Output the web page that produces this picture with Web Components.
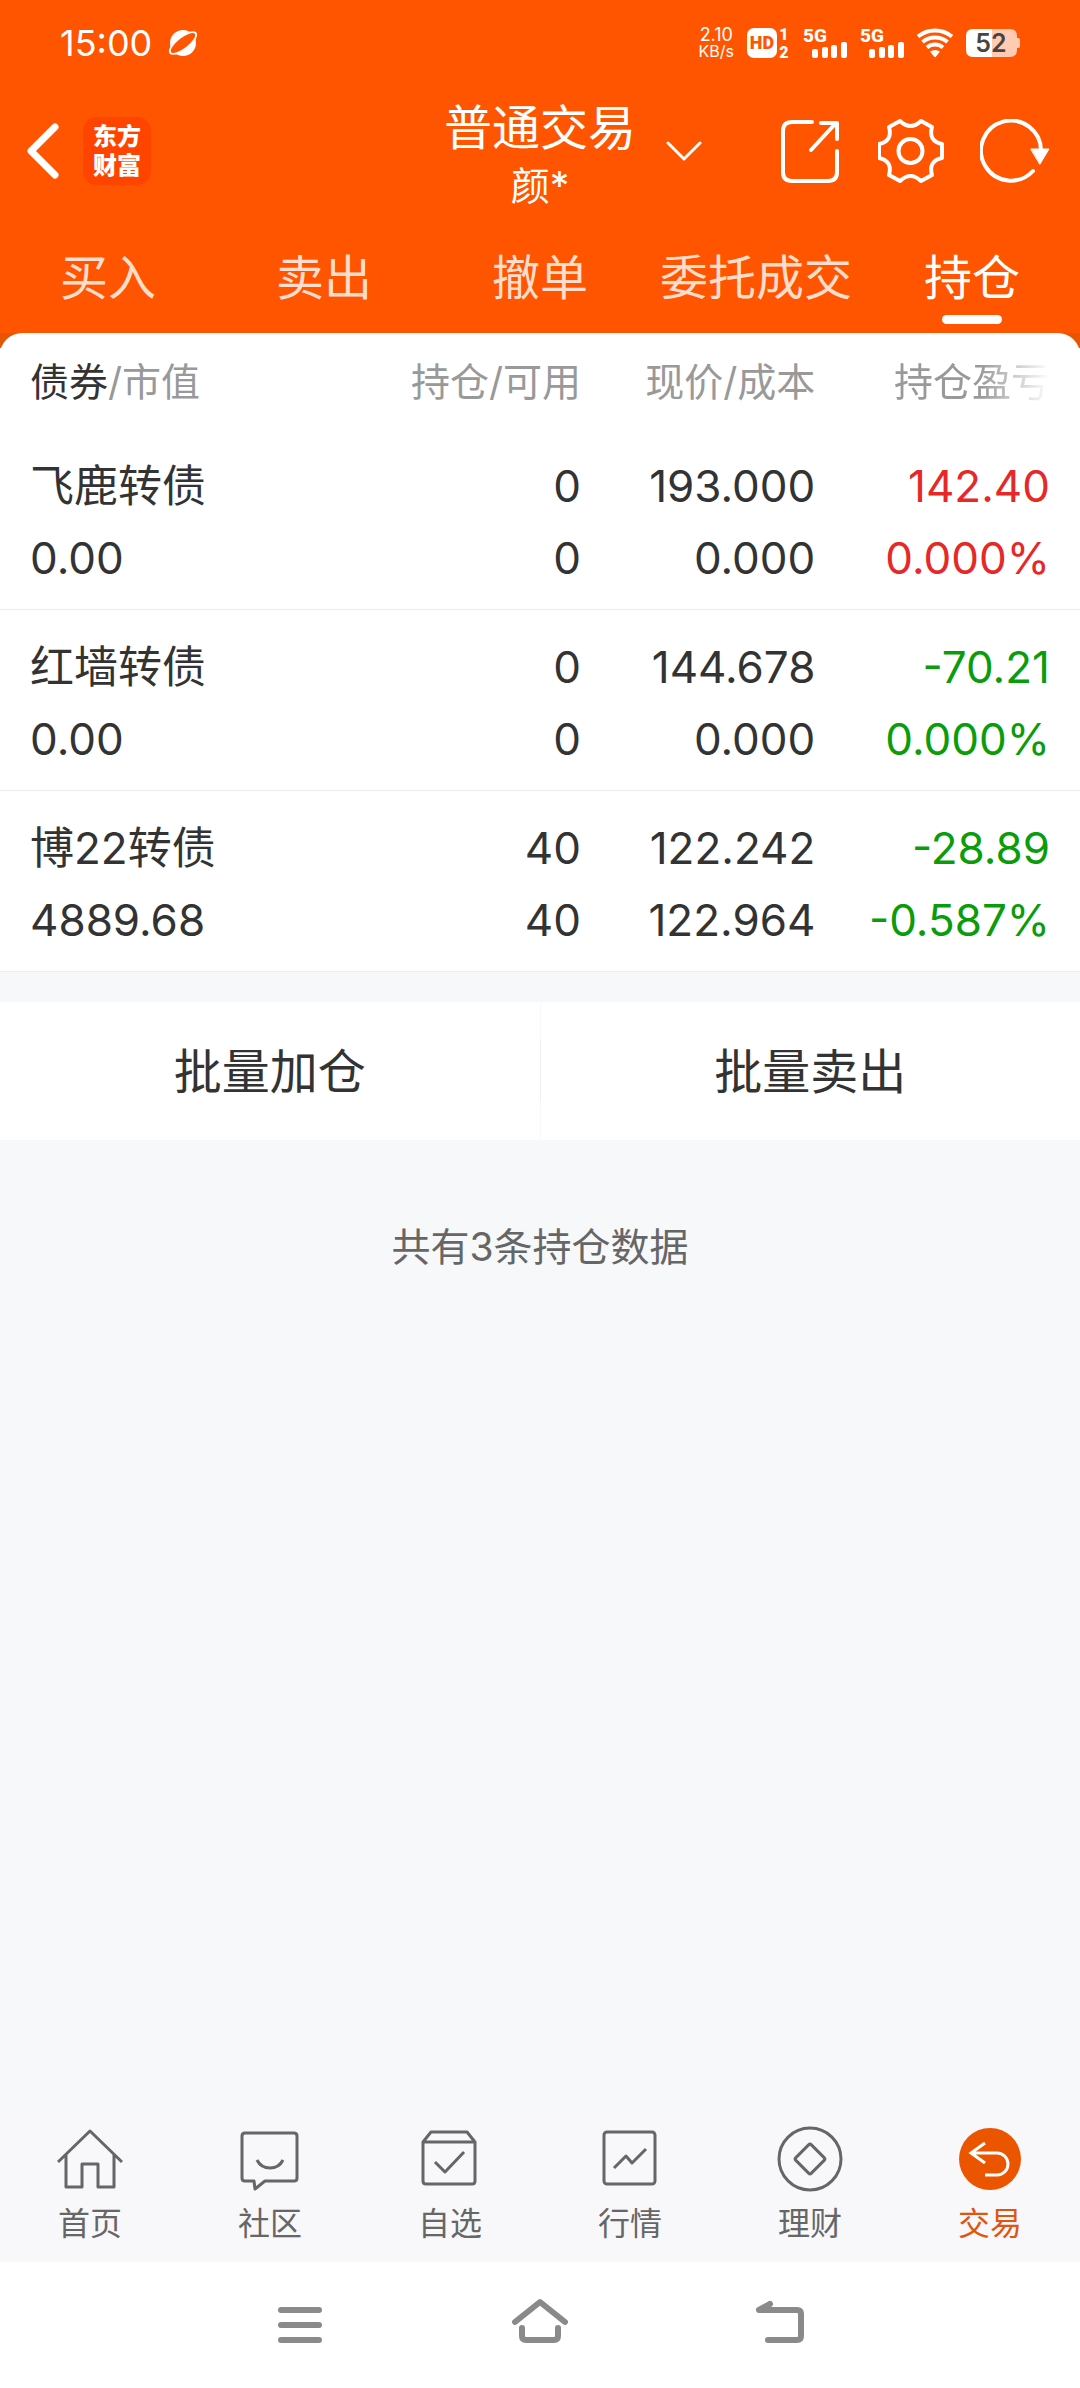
<!DOCTYPE html>
<html lang="zh-CN">
<head>
<meta charset="UTF-8">
<meta name="viewport" content="width=device-width, initial-scale=1">
<title>普通交易</title>
<style>
  body {
    margin: 0;
    min-height: 100vh;
    display: flex;
    flex-direction: column;
    background: #f7f8fa;
    color: #333;
    font-family: Inter, "Noto Sans CJK SC", sans-serif;
  }
  main {
    flex: 1;
  }
  .summary {
    margin: 0;
    padding: 77px 30px;
    color: #666;
    font-size: 39px;
    line-height: 60px;
    text-align: center;
  }
</style>
</head>
<body>
  <status-bar time="15:00" speed="2.10" battery="52"></status-bar>
  <trade-header>
    普通交易
    <span slot="account">颜*</span>
  </trade-header>
  <trade-tabs>
    <trade-tab>买入</trade-tab>
    <trade-tab>卖出</trade-tab>
    <trade-tab>撤单</trade-tab>
    <trade-tab>委托成交</trade-tab>
    <trade-tab active>持仓</trade-tab>
  </trade-tabs>
  <main>
    <holdings-table></holdings-table>
    <batch-actions>
      <span slot="buy">批量加仓</span>
      <span slot="sell">批量卖出</span>
    </batch-actions>
    <p class="summary">共有3条持仓数据</p>
  </main>
  <app-tabbar>
    <app-tab icon="home">首页</app-tab>
    <app-tab icon="community">社区</app-tab>
    <app-tab icon="watchlist">自选</app-tab>
    <app-tab icon="market">行情</app-tab>
    <app-tab icon="wealth">理财</app-tab>
    <app-tab icon="trade" active>交易</app-tab>
  </app-tabbar>
  <system-nav></system-nav>

<script>
class StatusBar extends HTMLElement {
  connectedCallback() {
    const signal = `
      <svg width="44" height="30" viewBox="0 0 44 30">
        <text x="0" y="14" font-family="Roboto" font-size="19" font-weight="800">5G</text>
        <rect x="9" y="21" width="6" height="9" rx="2"/>
        <rect x="19" y="19" width="6" height="11" rx="2"/>
        <rect x="28" y="17" width="6" height="13" rx="2"/>
        <rect x="38" y="14" width="6" height="16" rx="2"/>
      </svg>`;
    this.attachShadow({ mode: 'open' });
    this.shadowRoot.innerHTML = `
      <style>
        :host {
          display: flex;
          align-items: center;
          justify-content: space-between;
          padding: 20px 60px;
          background: #ff5500;
          color: #fff;
        }
        .left, .right {
          display: flex;
          align-items: center;
        }
        .left { gap: 16px; }
        .right { gap: 13px; }
        time {
          font-size: 36px;
          line-height: 46px;
        }
        svg {
          display: block;
          overflow: visible;
          fill: #fff;
        }
        .speed {
          display: flex;
          flex-direction: column;
          align-items: center;
          font-size: 18px;
          line-height: 16px;
        }
        .speed small { font-size: 16px; }
      </style>
      <div class="left">
        <time>${this.getAttribute('time')}</time>
        <svg width="30" height="30" viewBox="0 0 30 30">
          <ellipse cx="15" cy="15" rx="17" ry="7" transform="rotate(-38 15 15)"/>
          <circle cx="15" cy="15" r="13"/>
          <ellipse cx="15" cy="15" rx="15" ry="5" transform="rotate(-38 15 15)" fill="#ff5500"/>
        </svg>
      </div>
      <div class="right">
        <div class="speed"><span>${this.getAttribute('speed')}</span><small>KB/s</small></div>
        <svg width="43" height="30" viewBox="0 0 43 30">
          <rect width="30" height="30" rx="7"/>
          <text x="15" y="21" font-family="Roboto" font-size="18" font-weight="900" text-anchor="middle" fill="#ff5500">HD</text>
          <text x="37" y="12" font-family="Roboto" font-size="16" font-weight="900" text-anchor="middle">1</text>
          <text x="37" y="30" font-family="Roboto" font-size="16" font-weight="900" text-anchor="middle">2</text>
        </svg>
        ${signal}
        ${signal}
        <svg width="36" height="30" viewBox="0 0 36 30">
          <g fill="none" stroke="#fff" stroke-width="4">
            <path d="M1 8.5A27 27 0 0 1 35 8.5"/>
            <path d="M5.500 14A19.500 19.500 0 0 1 30.500 14"/>
            <path d="M10 19.500A12.500 12.500 0 0 1 26 19.500"/>
          </g>
          <path d="M13 23.500Q18 20.500 23 23.500L19 28.500Q18 30 17 28.500Z"/>
        </svg>
        <svg width="54" height="28" viewBox="0 0 54 28">
          <path d="M26 0H44Q51 0 51 7V9H52Q54 9 54 11V17Q54 19 52 19H51V21Q51 28 44 28H26Z" fill="#ffccb3"/>
          <path d="M26 0H7Q0 0 0 7V21Q0 28 7 28H26Z"/>
          <text x="25" y="23" font-family="Inter" font-size="25" font-weight="600" text-anchor="middle" fill="#4a4440">${this.getAttribute('battery')}</text>
        </svg>
      </div>
    `;
  }
}

class TradeHeader extends HTMLElement {
  connectedCallback() {
    this.attachShadow({ mode: 'open' });
    this.shadowRoot.innerHTML = `
      <style>
        :host {
          display: grid;
          grid-template-columns: 1fr auto 1fr;
          align-items: center;
          padding: 0 30px 0 24px;
          background: #ff5500;
          color: #fff;
        }
        .side {
          display: flex;
          align-items: center;
        }
        .actions {
          justify-content: space-between;
          padding-left: 30px;
        }
        .icons {
          display: flex;
          gap: 36px;
        }
        .title {
          padding: 13px 0 1px 6px;
          text-align: center;
        }
        h1 {
          margin: 0;
          font-size: 48px;
          font-weight: 400;
          line-height: 58px;
        }
        .account {
          font-size: 39px;
          line-height: 58px;
        }
        button {
          display: block;
          margin: 0;
          padding: 0;
          border: 0;
          background: none;
          color: inherit;
        }
        svg {
          display: block;
          fill: none;
          stroke: #fff;
          stroke-width: 4;
          stroke-linecap: round;
          stroke-linejoin: round;
        }
        .logo {
          display: grid;
          place-content: center;
          width: 68px;
          height: 68px;
          margin-left: 20px;
          border-radius: 14px;
          background: #ff4400;
          color: #fff;
          font-size: 24px;
          font-weight: 900;
          line-height: 29px;
          text-decoration: none;
        }
      </style>
      <div class="side">
        <button aria-label="返回">
          <svg width="39" height="60" viewBox="0 0 39 60"><path d="M31 6L7 30L31 54" stroke-width="7"/></svg>
        </button>
        <a class="logo" href="#">东方<br>财富</a>
      </div>
      <div class="title">
        <h1><slot></slot></h1>
        <div class="account"><slot name="account"></slot></div>
      </div>
      <div class="side actions">
        <button aria-label="切换账户">
          <svg width="36" height="22" viewBox="0 0 36 22"><path d="M2 3L18 19L34 3" stroke-width="3"/></svg>
        </button>
        <div class="icons">
          <button aria-label="分享">
            <svg width="66" height="64" viewBox="0 0 66 64">
              <path d="M36 3H16Q7 3 7 12V53Q7 62 16 62H52Q61 62 61 53V32"/>
              <path d="M35 31L60 4M45 4H61V20"/>
            </svg>
          </button>
          <button aria-label="设置">
            <svg width="66" height="64" viewBox="0 0 66 64">
              <path d="M22 2Q32.500 12 43 2L54 8Q50 22 64 25V39Q50 42 54 56L43 62Q32.500 52 22 62L11 56Q15 42 1 39V25Q15 22 11 8Z"/>
              <circle cx="32.500" cy="32" r="12"/>
            </svg>
          </button>
          <button aria-label="刷新">
            <svg width="70" height="64" viewBox="0 0 70 64">
              <path d="M53 52A30 30 0 1 1 61 32"/>
              <path d="M51 30H69L60 45Z" fill="#fff" stroke-width="1"/>
            </svg>
          </button>
        </div>
      </div>
    `;
  }
}

class TradeTabs extends HTMLElement {
  connectedCallback() {
    this.attachShadow({ mode: 'open' });
    this.shadowRoot.innerHTML = `
      <style>
        :host {
          display: block;
          background: #ff5500;
        }
        nav {
          display: grid;
          grid-auto-flow: column;
          grid-auto-columns: 1fr;
        }
      </style>
      <nav><slot></slot></nav>
    `;
  }
}

class TradeTab extends HTMLElement {
  connectedCallback() {
    this.attachShadow({ mode: 'open' });
    this.shadowRoot.innerHTML = `
      <style>
        :host {
          display: block;
        }
        button {
          display: flex;
          flex-direction: column;
          align-items: center;
          gap: 7px;
          width: 100%;
          padding: 32px 0 9px;
          border: 0;
          background: none;
          color: #ffddcc;
          font: inherit;
          font-size: 48px;
          line-height: 60px;
          white-space: nowrap;
        }
        button::after {
          content: "";
          width: 60px;
          height: 9px;
          border-radius: 5px;
        }
        :host([active]) button { color: #fff; }
        :host([active]) button::after { background: #fff; }
      </style>
      <button><slot></slot></button>
    `;
  }
}

const holdings = [
  { name: '飞鹿转债', value: '0.00', held: '0', usable: '0', price: '193.000', cost: '0.000', profit: '142.40', rate: '0.000%', trend: 'up' },
  { name: '红墙转债', value: '0.00', held: '0', usable: '0', price: '144.678', cost: '0.000', profit: '-70.21', rate: '0.000%', trend: 'down' },
  { name: '博22转债', value: '4889.68', held: '40', usable: '40', price: '122.242', cost: '122.964', profit: '-28.89', rate: '-0.587%', trend: 'down' },
];

class HoldingsTable extends HTMLElement {
  connectedCallback() {
    const rows = holdings.map((h) => `
      <tr>
        <td><div>${h.name}</div><div>${h.value}</div></td>
        <td><div>${h.held}</div><div>${h.usable}</div></td>
        <td><div>${h.price}</div><div>${h.cost}</div></td>
        <td class="${h.trend}"><div>${h.profit}</div><div>${h.rate}</div></td>
      </tr>`).join('');
    this.attachShadow({ mode: 'open' });
    this.shadowRoot.innerHTML = `
      <style>
        /* darker orange shows only behind the rounded top corners */
        :host {
          display: block;
          background: linear-gradient(#e85500 15px, #fff 15px);
        }
        .sheet {
          border-radius: 22px 22px 0 0;
          background: #fff;
        }
        table {
          width: 100%;
          border-collapse: separate;
          border-spacing: 0;
          table-layout: fixed;
        }
        th, td {
          box-sizing: border-box;
          padding: 0;
          text-align: right;
          white-space: nowrap;
        }
        th {
          height: 96px;
          padding-top: 2px;
          color: #999;
          font-size: 39px;
          font-weight: 400;
          line-height: 60px;
        }
        th b {
          color: #333;
          font-weight: 400;
        }
        td {
          padding: 21px 0 15px;
          border-bottom: 1px solid #ececec;
          font-size: 44px;
          line-height: 72px;
        }
        th:first-child, td:first-child {
          width: 29%;
          padding-left: 30px;
          text-align: left;
        }
        th:last-child, td:last-child { padding-right: 30px; }
        .fade {
          display: inline-block;
          -webkit-mask-image: linear-gradient(to right, #000 55%, transparent);
          mask-image: linear-gradient(to right, #000 55%, transparent);
        }
        .held { width: 24.8%; }
        .price { width: 21.7%; }
        .up { color: #e62828; }
        .down { color: #0a9c0a; }
      </style>
      <div class="sheet">
        <table>
          <thead>
            <tr>
              <th><b>债券</b>/市值</th>
              <th class="held">持仓/可用</th>
              <th class="price">现价/成本</th>
              <th><span class="fade">持仓盈亏</span></th>
            </tr>
          </thead>
          <tbody>${rows}</tbody>
        </table>
      </div>
    `;
  }
}

class BatchActions extends HTMLElement {
  connectedCallback() {
    this.attachShadow({ mode: 'open' });
    this.shadowRoot.innerHTML = `
      <style>
        :host {
          display: flex;
          margin-top: 30px;
          background: #fff;
        }
        button {
          flex: 1;
          padding: 40px 0 38px;
          border: 0;
          background: none;
          color: #333;
          font: inherit;
          font-size: 48px;
          line-height: 60px;
        }
        i {
          width: 1px;
          background: linear-gradient(#f7f8fa 39px, #f0f0f2 39px 99px, #f7f8fa 99px);
        }
      </style>
      <button><slot name="buy"></slot></button>
      <i></i>
      <button><slot name="sell"></slot></button>
    `;
  }
}

class AppTabbar extends HTMLElement {
  connectedCallback() {
    this.attachShadow({ mode: 'open' });
    this.shadowRoot.innerHTML = `
      <style>
        :host {
          display: block;
          background: #f8f8fb;
        }
        nav {
          display: grid;
          grid-auto-flow: column;
          grid-auto-columns: 1fr;
        }
      </style>
      <nav><slot></slot></nav>
    `;
  }
}

const tabIcons = {
  home: `<path d="M1 36L33 5L65 36M9 29V61H25V38H41V61H57V29"/>`,
  community: `
    <path d="M8 7H57Q60 7 60 10V52Q60 55 57 55H28L18 63L17 55H8Q5 55 5 52V10Q5 7 8 7Z"/>
    <path d="M20 34Q24 42 33 42Q42 42 46 34"/>`,
  watchlist: `
    <path d="M6 16L14 6H50L58 16V55Q58 58 55 58H9Q6 58 6 55ZM6 16H58"/>
    <path d="M18 36L28 46L47 26"/>`,
  market: `
    <rect x="7" y="6" width="51" height="52" rx="3"/>
    <path d="M17 42L29 30L35 37L49 23"/>`,
  wealth: `
    <circle cx="33" cy="33" r="31"/>
    <rect x="22" y="22" width="22" height="22" rx="2" transform="rotate(45 33 33)"/>`,
  trade: `
    <circle cx="33" cy="33" r="31" fill="#eb5500" stroke="none"/>
    <path d="M28 17L14 27L28 37M14 27H40A11 11 0 0 1 40 49H28" stroke="#fff" stroke-linecap="butt" stroke-linejoin="miter"/>`,
};

class AppTab extends HTMLElement {
  connectedCallback() {
    this.attachShadow({ mode: 'open' });
    this.shadowRoot.innerHTML = `
      <style>
        :host {
          display: block;
          color: #666;
        }
        :host([active]) { color: #e0550f; }
        a {
          display: flex;
          flex-direction: column;
          align-items: center;
          gap: 11px;
          padding: 16px 0 17px;
          color: inherit;
          font-size: 32px;
          line-height: 42px;
          text-decoration: none;
        }
        svg {
          display: block;
          fill: none;
          stroke: #666;
          stroke-width: 3;
          stroke-linejoin: round;
        }
      </style>
      <a href="#">
        <svg width="66" height="66" viewBox="0 0 66 66">${tabIcons[this.getAttribute('icon')]}</svg>
        <span><slot></slot></span>
      </a>
    `;
  }
}

class SystemNav extends HTMLElement {
  connectedCallback() {
    this.attachShadow({ mode: 'open' });
    this.shadowRoot.innerHTML = `
      <style>
        :host {
          display: grid;
          grid-template-columns: repeat(3, 1fr);
          justify-items: center;
          padding: 33px 16.666%;
          background: #fff;
        }
        button {
          margin: 0;
          padding: 0;
          border: 0;
          background: none;
        }
        svg {
          display: block;
          fill: none;
          stroke: #8a8a8a;
          stroke-width: 6;
          stroke-linecap: round;
          stroke-linejoin: round;
        }
      </style>
      <button aria-label="最近任务">
        <svg width="60" height="60" viewBox="0 0 60 60"><path d="M11 15H49M11 30H49M11 45H49"/></svg>
      </button>
      <button aria-label="主屏幕">
        <svg width="60" height="60" viewBox="0 0 60 60"><path d="M5 27L30 7L55 27M12 33V41Q12 45 16 45H44Q48 45 48 41V33"/></svg>
      </button>
      <button aria-label="返回">
        <svg width="60" height="60" viewBox="0 0 60 60"><path d="M20 9L9 15H47Q51 15 51 19V41Q51 45 47 45H18"/></svg>
      </button>
    `;
  }
}

customElements.define('status-bar', StatusBar);
customElements.define('trade-header', TradeHeader);
customElements.define('trade-tabs', TradeTabs);
customElements.define('trade-tab', TradeTab);
customElements.define('holdings-table', HoldingsTable);
customElements.define('batch-actions', BatchActions);
customElements.define('app-tabbar', AppTabbar);
customElements.define('app-tab', AppTab);
customElements.define('system-nav', SystemNav);
</script>
</body>
</html>
